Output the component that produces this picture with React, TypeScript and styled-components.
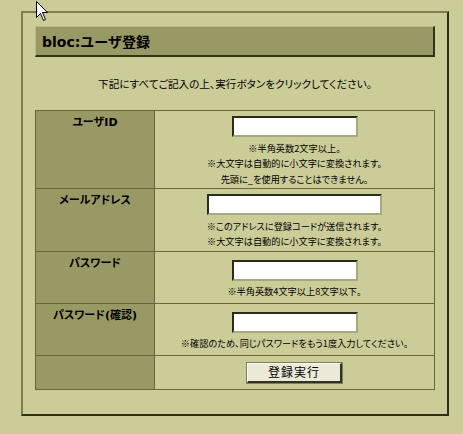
import React from "react";
import styled, { createGlobalStyle } from "styled-components";

const Global = createGlobalStyle`
  html, body {
    margin: 0;
    padding: 0;
    background: #cccc99;
  }
  body {
    font-family: "Noto Sans CJK JP", "DejaVu Sans", sans-serif;
    color: #000;
  }
`;

const Page = styled.div`
  position: relative;
  padding: 11px 0 20px 21px;
`;

const Cursor = styled.svg`
  position: absolute;
  left: 36px;
  top: 1px;
  width: 13px;
  height: 21px;
`;

const Panel = styled.div`
  box-sizing: border-box;
  width: 428px;
  border-style: solid;
  border-width: 2px;
  border-color: #7d7d4d #2e2e18 #2e2e18 #7d7d4d;
  padding: 13px 12px 24px 12px;
  display: flex;
  flex-direction: column;
`;

const Header = styled.div`
  box-sizing: border-box;
  height: 31px;
  background: #999966;
  border-style: solid;
  border-width: 1px 2px 2px 1px;
  border-color: #b8b88a #333319 #333319 #b8b88a;
  display: flex;
  align-items: center;
  padding-left: 6px;
  font-family: "DejaVu Sans", "Noto Sans CJK JP", sans-serif;
  font-weight: bold;
  font-size: 14px;
  color: #000;
`;

const Intro = styled.p`
  margin: 19px 0 18px;
  line-height: 16px;
  height: 16px;
  font-size: 10.6px;
  font-feature-settings: "palt";
  text-align: center;
  color: #000;
`;

const Table = styled.div`
  box-sizing: border-box;
  width: 400px;
  border-style: solid;
  border-width: 1px 1px 0 1px;
  border-color: #66663a;
  display: flex;
  flex-direction: column;
`;

const Row = styled.div<{ $h: number }>`
  box-sizing: border-box;
  height: ${(p) => p.$h}px;
  display: grid;
  grid-template-columns: 119px 1fr;
  border-bottom: 1px solid #66663a;
`;

const Label = styled.div`
  box-sizing: border-box;
  background: #999966;
  border-right: 1px solid #66663a;
  padding-top: 5px;
  text-align: center;
  font-family: "DejaVu Sans", "Noto Sans CJK JP", sans-serif;
  font-weight: bold;
  font-size: 11px;
  font-feature-settings: "palt";
  line-height: 14px;
  color: #000;
`;

const Value = styled.div<{ $top?: number }>`
  box-sizing: border-box;
  display: flex;
  flex-direction: column;
  align-items: center;
  justify-content: center;
  padding-top: ${(p) => (p.$top ?? 4)}px;
`;

const Field = styled.input<{ $w: number }>`
  box-sizing: border-box;
  width: ${(p) => p.$w}px;
  height: 21px;
  margin: 0;
  padding: 0 3px;
  background: #fff;
  border-style: solid;
  border-width: 2px;
  border-color: #2b2b1a #a8a880 #a8a880 #2b2b1a;
  outline: none;
`;

const Notes = styled.div`
  margin-top: 3.5px;
  font-size: 9.2px;
  font-feature-settings: "palt";
  line-height: 15.5px;
  text-align: center;
  color: #000;
`;

const SubmitButton = styled.button`
  box-sizing: border-box;
  width: 95px;
  height: 20px;
  margin: 0;
  padding: 0;
  background: #ece9d8;
  border-style: solid;
  border-width: 1px 2px 2px 1px;
  border-color: #fbfbf2 #333322 #333322 #fbfbf2;
  box-shadow: 0 0 0 1px #7f7f5a;
  font-family: "Noto Sans CJK JP", sans-serif;
  font-size: 12px;
  letter-spacing: 1px;
  line-height: 16px;
  color: #000;
`;

export default function App() {
  return (
    <Page>
      <Global />
      <Cursor viewBox="0 0 13 21">
        <path
          d="M0.5 0.5 L0.5 16.5 L4.5 12.5 L7.5 19.5 L9.5 18.5 L6.5 11.5 L11.5 11.5 Z"
          fill="#fff"
          stroke="#000"
          strokeWidth="1"
        />
      </Cursor>
      <Panel>
        <Header>bloc:ユーザ登録</Header>
        <Intro>下記にすべてご記入の上、実行ボタンをクリックしてください。</Intro>
        <Table>
          <Row $h={78}>
            <Label>ユーザID</Label>
            <Value>
              <Field $w={126} type="text" />
              <Notes>
                ※半角英数2文字以上。
                <br />
                ※大文字は自動的に小文字に変換されます。
                <br />
                先頭に_を使用することはできません。
              </Notes>
            </Value>
          </Row>
          <Row $h={63}>
            <Label>メールアドレス</Label>
            <Value>
              <Field $w={175} type="text" />
              <Notes>
                ※このアドレスに登録コードが送信されます。
                <br />
                ※大文字は自動的に小文字に変換されます。
              </Notes>
            </Value>
          </Row>
          <Row $h={52}>
            <Label>パスワード</Label>
            <Value>
              <Field $w={126} type="password" />
              <Notes>※半角英数4文字以上8文字以下。</Notes>
            </Value>
          </Row>
          <Row $h={52}>
            <Label>パスワード(確認)</Label>
            <Value>
              <Field $w={126} type="password" />
              <Notes>※確認のため、同じパスワードをもう1度入力してください。</Notes>
            </Value>
          </Row>
          <Row $h={34}>
            <Label />
            <Value $top={0}>
              <SubmitButton type="button">登録実行</SubmitButton>
            </Value>
          </Row>
        </Table>
      </Panel>
    </Page>
  );
}
